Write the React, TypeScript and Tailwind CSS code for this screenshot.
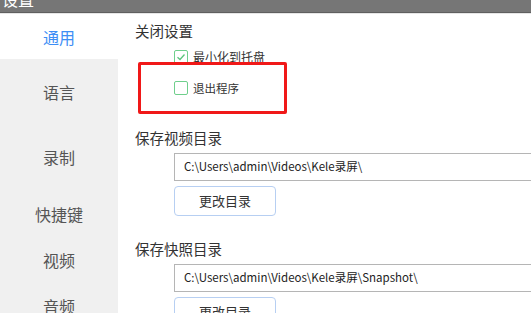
import React from "react";

const font = { fontFamily: '"Noto Sans CJK SC", "Noto Sans", sans-serif' };

function Box({ checked }: { checked?: boolean }) {
  return (
    <div className="w-[14px] h-[14px] rounded-[2px] border-[1.5px] border-[#6fcf8c] bg-white flex items-center justify-center shrink-0">
      {checked && (
        <svg width="10" height="10" viewBox="0 0 10 10">
          <path d="M1.5 5.2 L4 7.5 L8.5 2.5" fill="none" stroke="#5cc47c" strokeWidth="1.3" />
        </svg>
      )}
    </div>
  );
}

export default function App() {
  const side = [
    { t: "语言", h: "h-[66px]" },
    { t: "录制", h: "h-[64px]" },
    { t: "快捷键", h: "h-[50px]" },
    { t: "视频", h: "h-[42px]" },
    { t: "音频", h: "h-[50px]" },
  ];
  return (
    <div className="w-[531px] h-[313px] overflow-hidden bg-white relative" style={font}>
      <div className="h-[13px] bg-[#767676] border-b border-[#5f5f5f] overflow-hidden">
        <div className="text-white text-[16px] leading-[16px] mt-[-9px] pl-[2px]">设置</div>
      </div>
      <div className="h-[1px] bg-[#e6e6e6]" />
      <div className="flex">
        <div className="w-[118px] shrink-0 bg-[#f0f0f0]">
          <div className="h-[45px] bg-white flex items-center justify-center text-[16px] text-[#3d8ef5]">通用</div>
          {side.map((s) => (
            <div key={s.t} className={`${s.h} flex items-center justify-center text-[16px] text-[#555]`}>{s.t}</div>
          ))}
        </div>
        <div className="flex-1 pl-[17px]">
          <div className="text-[14.5px] leading-[20px] text-[#333] mt-[7px]">关闭设置</div>
          <div className="pl-[39px] mt-[9px] flex items-center gap-[5px]">
            <Box checked />
            <span className="text-[12px] text-[#333] leading-[14px]">最小化到托盘</span>
          </div>
          <div className="pl-[39px] mt-[17px] flex items-center gap-[5px]">
            <Box />
            <span className="text-[11.5px] text-[#333] leading-[14px]">退出程序</span>
          </div>
          <div className="text-[14.5px] leading-[20px] text-[#333] mt-[33px]">保存视频目录</div>
          <div className="ml-[39px] mt-[5px] h-[28px] border border-[#b5b5b5] flex items-center pl-[9px] text-[11.5px] text-[#222] whitespace-nowrap w-[400px]">
            C:\Users\admin\Videos\Kele录屏\
          </div>
          <div className="ml-[39px] mt-[5px] w-[102px] h-[30px] rounded-[4px] border border-[#b7cff2] flex items-center justify-center text-[13px] text-[#333]">
            更改目录
          </div>
          <div className="text-[14.5px] leading-[20px] text-[#333] mt-[23px]">保存快照目录</div>
          <div className="ml-[39px] mt-[5px] h-[28px] border border-[#b5b5b5] flex items-center pl-[9px] text-[11.5px] text-[#222] whitespace-nowrap w-[400px]">
            C:\Users\admin\Videos\Kele录屏\Snapshot\
          </div>
          <div className="ml-[39px] mt-[5px] w-[102px] h-[30px] rounded-[4px] border border-[#b7cff2] flex items-center justify-center text-[13px] text-[#333]">
            更改目录
          </div>
        </div>
      </div>
      <div className="absolute left-[138px] top-[62px] w-[149px] h-[52px] border-[3px] border-[#f01818] rounded-[2px]" />
    </div>
  );
}
